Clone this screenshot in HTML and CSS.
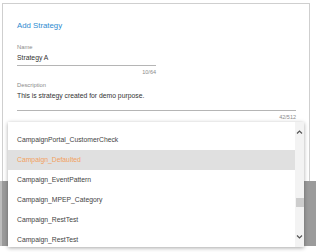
FILE: index.html
```html
<!DOCTYPE HTML>
<html>
<head>
	<meta http-equiv="Content-Type" content="text/html; charset=utf-8">
	<title>Add Strategy</title>

	<link rel="stylesheet" href="styles.css">
</head>

<body>
<div class="screen">
	<div class="dialog">
		<div class="title">Add Strategy</div>

		<div class="field name">
			<div class="label">Name</div>
			<div class="value">Strategy A</div>
			<div class="counter">10/64</div>
		</div>

		<div class="field desc">
			<div class="label">Description</div>
			<div class="value">This is strategy created for demo purpose.</div>
			<div class="counter">42/512</div>
		</div>

		<div class="label cat">Category</div>
	</div>
	<div class="backdrop"></div>

	<div class="dropdown">
		<ul class="options">
			<li>CampaignPortal_CustomerCheck</li>
			<li class="active">Campaign_Defaulted</li>
			<li>Campaign_EventPattern</li>
			<li>Campaign_MPEP_Category</li>
			<li>Campaign_RestTest</li>
			<li>Campaign_RestTest</li>
		</ul>
		<div class="scrollbar">
			<svg class="arrow" width="9" height="9" viewBox="0 0 9 9"><path d="M2 5.5 L4.5 3 L7 5.5" fill="none" stroke="#555" stroke-width="1.2"/></svg>
			<div class="track"><div class="thumb"></div></div>
			<svg class="arrow" width="9" height="9" viewBox="0 0 9 9"><path d="M2 3.5 L4.5 6 L7 3.5" fill="none" stroke="#555" stroke-width="1.2"/></svg>
		</div>
	</div>
</div>
</body>
</html>
```

FILE: styles.css
```css
*{
	margin: 0;
	padding: 0;
}
body{
	background: #fff;
	font-family: "Liberation Sans", Arial, sans-serif;
}
.screen{
	width: 316px;
	height: 252px;
	position: relative;
	overflow: hidden;
}

.dialog{
	width: 278px;
	height: 177px;
	margin: 3px 0 0 2px;
	padding: 0 14px;
	border: 1px solid #cfcfcf;
	border-bottom: none;
	background: #fff;
}
.title{
	padding-top: 16px;
	font-size: 7.8px;
	line-height: 12px;
	color: #2f8bd0;
}

.label{
	font-size: 5.8px;
	line-height: 8px;
	color: #8a8a8a;
}
.value{
	font-size: 6.8px;
	line-height: 10px;
	color: #333;
	border-bottom: 1px solid #b5b5b5;
}
.counter{
	font-size: 5.5px;
	line-height: 8px;
	color: #8a8a8a;
	text-align: right;
}

.name{
	width: 139px;
	margin-top: 11px;
}
.name .value{
	margin-top: 2px;
	padding-bottom: 2px;
}
.name .counter{
	margin-top: 2px;
}

.desc{
	width: 279px;
	margin-top: 5px;
}
.desc .value{
	margin-top: 2px;
	padding-bottom: 9px;
}
.desc .counter{
	margin-top: 2px;
}
.cat{
	margin-top: 0;
	color: #bbb;
}

.backdrop{
	height: 65px;
	background: #9b9b9b;
	border-left: 2px solid #bdbdbd;
}

.dropdown{
	position: absolute;
	left: 8px;
	top: 122px;
	width: 296px;
	height: 125px;
	background: #fff;
	box-shadow: 0 1px 4px rgba(0,0,0,0.35);
	display: flex;
}
.options{
	flex: 1;
	list-style: none;
	padding-top: 8px;
	overflow: hidden;
}
.options li{
	height: 20px;
	line-height: 20px;
	padding-left: 9px;
	font-size: 6.8px;
	color: #444;
}
.options li.active{
	background: #e0e0e0;
	color: #f2a060;
}

.scrollbar{
	width: 9px;
	background: #f3f3f3;
	display: flex;
	flex-direction: column;
	padding: 6px 0;
}
.track{
	flex: 1;
	position: relative;
}
.thumb{
	position: absolute;
	left: 1px;
	right: 0;
	top: 61px;
	height: 9px;
	background: #cdcdcd;
}
```
